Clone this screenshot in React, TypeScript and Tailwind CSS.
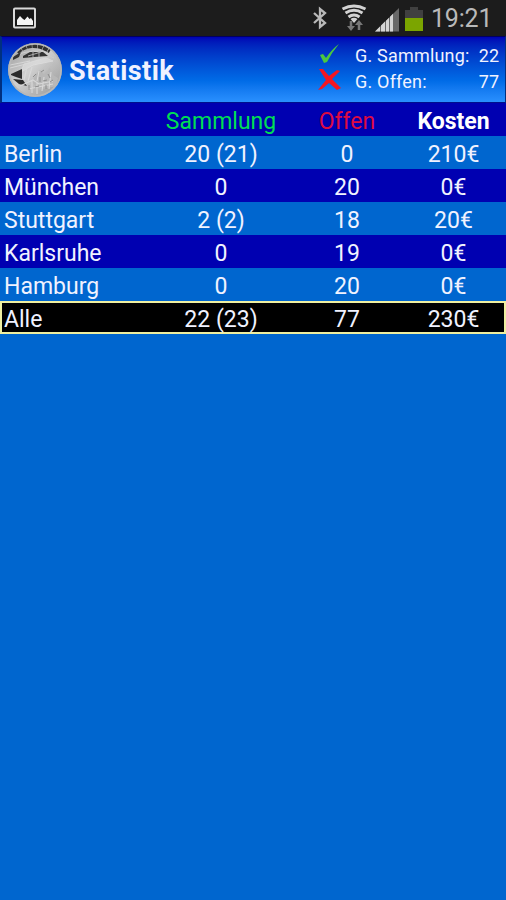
const rows = [
  { city: 'Berlin', owned: '20 (21)', open: '0', cost: '210€' },
  { city: 'München', owned: '0', open: '20', cost: '0€' },
  { city: 'Stuttgart', owned: '2 (2)', open: '18', cost: '20€' },
  { city: 'Karlsruhe', owned: '0', open: '19', cost: '0€' },
  { city: 'Hamburg', owned: '0', open: '20', cost: '0€' },
];

const columns = 'grid h-[33px] grid-cols-[151px_132px_120px_93px] pl-1 pt-[3px] text-center text-[23px] leading-[31px]';

function PictureIcon() {
  return (
    <svg className="h-6 w-6" viewBox="0 0 24 24">
      <rect x="2" y="2.500" width="21" height="19" rx="1" fill="#161616" stroke="#d9d9d9" strokeWidth="2" />
      <path d="M5 19V14l3-4 3 3 1.500 1 3-3.500 2 2.500 1.500-1 2 3v4z" fill="#f4f4f4" />
    </svg>
  );
}

function StatusBar() {
  return (
    <header className="flex h-9 items-center bg-[#1c1c1c] pl-3 pr-[15px]">
      <PictureIcon />
      <svg className="ml-auto h-6 w-4 shrink-0" viewBox="0 0 16 24" fill="none" stroke="#b9b9b9" strokeWidth="2.300">
        <path d="M2 7l11 10-5 4V3l5 4L2 17" />
      </svg>
      <svg className="ml-[13px] h-7 w-[26px] shrink-0" viewBox="0 0 26 28" fill="none">
        <path d="M1.500 5Q13 -1 24.500 5M4.500 9Q13 3.500 21.500 9M7.500 13Q13 9 18.500 13" stroke="#d2d2d2" strokeWidth="3" />
        <path d="M9.500 15Q13 12.500 16.500 15L13 19z" fill="#d2d2d2" />
        <path d="M10 17v7M18 26v-6" stroke="#777" strokeWidth="2.500" />
        <path d="M6 22h8l-4 5zM14 21h8l-4-5z" fill="#777" />
      </svg>
      <svg className="ml-[8px] mt-[3px] h-6 w-6 shrink-0" viewBox="0 0 24 24">
        <path d="M0 23.500L24 0v23.500z" fill="#686868" />
        <path d="M0 23.500L5 18.600v4.900zM6 17.600l4-4v9.900H6zM11 12.700l3-3v13.800h-3zM15 8.800l3-3v17.700h-3z" fill="#d4d4d4" />
      </svg>
      <svg className="ml-[6px] mt-[2px] h-[25px] w-[18px] shrink-0" viewBox="0 0 18 25">
        <path d="M0 3h5V0h8v3h5v9H0z" fill="#404040" />
        <path d="M0 11h18v13H0z" fill="#7ba500" />
      </svg>
      <span className="ml-[8px] w-[60px] whitespace-nowrap pt-[2px] text-[25px] leading-[34px] tracking-[-0.2px] text-[#b9b9b9]">19:21</span>
    </header>
  );
}

function Coin() {
  return (
    <svg className="h-[54px] w-[54px] shrink-0" viewBox="0 0 54 54">
      <defs>
        <linearGradient id="silver" x1="0" y1="0" x2="1" y2="1">
          <stop offset="0" stopColor="#999" />
          <stop offset=".45" stopColor="#d0d0d0" />
          <stop offset="1" stopColor="#969696" />
        </linearGradient>
        <clipPath id="coin"><circle cx="27" cy="27" r="26.500" /></clipPath>
      </defs>
      <circle cx="27" cy="27" r="27" fill="#afafaf" />
      <g clipPath="url(#coin)">
        <circle cx="27" cy="27" r="26" fill="url(#silver)" />
        <path d="M9 9Q24-3 42 8" fill="none" stroke="#303030" strokeWidth="4.500" strokeDasharray="5 .6" />
        <path d="M5 15Q25 1 46 15" fill="none" stroke="#ccc" strokeWidth="1" />
        <path d="M5 14l8-5-2 5-6 3zM15 13l7-4h13l5 4-14 1-11 1z" fill="#333" />
        <path d="M20 13l13-4M25 8v6M31 8v6" stroke="#aaa" strokeWidth="1" />
        <path d="M16 21L38 15 45 18 25 22 13 29zM2 22l20-4M2 25l20-5" fill="#ddd" stroke="#e4e4e4" strokeWidth="1" opacity=".65" />
        <path d="M3 31l11-5v10l-6-2-5-2zM5 36l10 1 4 6-8-2z" fill="#2b2b2b" />
        <path d="M28 31l4-4 4 4 6-6 3 7 5 3-2 8-17 4-7-8z" fill="#b8b8b8" />
        <path d="M19 24l-3 13M24 24l-4 14M12 43l13-6 6 4 14-3M24 38v12M29 40v11M36 34l-2 14M43 29l-2 17M31 28l-2 10M20 46l25-5" fill="none" stroke="#d8d8d8" strokeWidth="1.100" />
        <path d="M25 34l3-3M33 29l3-2M35 38l4-1M27 44l4-1M40 31l2 4M42 39l3-2M21 42v5M32 34v5M38 42v4" stroke="#8c8c8c" strokeWidth="1" />
      </g>
      <circle cx="27" cy="27" r="26" fill="none" stroke="#b8b8b8" strokeWidth="1.500" />
    </svg>
  );
}

export default function App() {
  return (
    <main className="h-[900px] w-[506px] overflow-hidden bg-[#0066cf] font-['Roboto',sans-serif] text-[#f0f2ff]">
      <StatusBar />
      <section className="h-[67px] border-b border-l-2 border-r border-t border-b-[#00108c] border-l-[#003080] border-r-[#003080] border-t-[#000060] bg-linear-to-b from-[#0000b4] to-[#2990ff]">
        <div className="flex h-full items-center pl-[6px] pr-[6px]">
          <Coin />
          <h1 className="ml-[7px] mt-[2px] text-[27px] font-bold leading-8 tracking-[0.45px]">Statistik</h1>
          <div className="mb-[3px] ml-auto grid w-[181px] grid-cols-[37px_1fr_auto] grid-rows-[26px_25px] items-center text-[18px] leading-[25px]">
            <svg className="h-6 w-6" viewBox="0 0 24 24">
              <path d="M2 11l3-1 3 4Q14 5 21 0 14 8 9 18L6 19z" fill="#4bc83f" />
            </svg>
            <span className="whitespace-nowrap tracking-[0.2px]">G. Sammlung:</span>
            <span className="text-right">22</span>
            <svg className="h-6 w-6" viewBox="0 0 24 24">
              <path d="M1 0l4 0 6 7 8-6 3 1-8 8 9 9-4 2-8-7-7 6-4 1 8-10z" fill="#f51622" />
            </svg>
            <span className="tracking-[0.2px]">G. Offen:</span>
            <span className="text-right">77</span>
          </div>
        </div>
      </section>
      <section>
        <div className={`${columns} bg-[#0000b1]`}>
          <span />
          <span className="text-[#00de54]">Sammlung</span>
          <span className="text-[#de0b42]">Offen</span>
          <span className="font-bold text-white">Kosten</span>
        </div>
        {rows.map((row) => (
          <div key={row.city} className={`${columns} odd:bg-[#0000b1] even:bg-[#0066cf]`}>
            <span className="text-left">{row.city}</span>
            <span>{row.owned}</span>
            <span>{row.open}</span>
            <span>{row.cost}</span>
          </div>
        ))}
        <div className={`${columns} bg-black shadow-[inset_0_0_0_2px_#efefa0]`}>
          <span className="text-left">Alle</span>
          <span>22 (23)</span>
          <span>77</span>
          <span>230€</span>
        </div>
      </section>
    </main>
  );
}
